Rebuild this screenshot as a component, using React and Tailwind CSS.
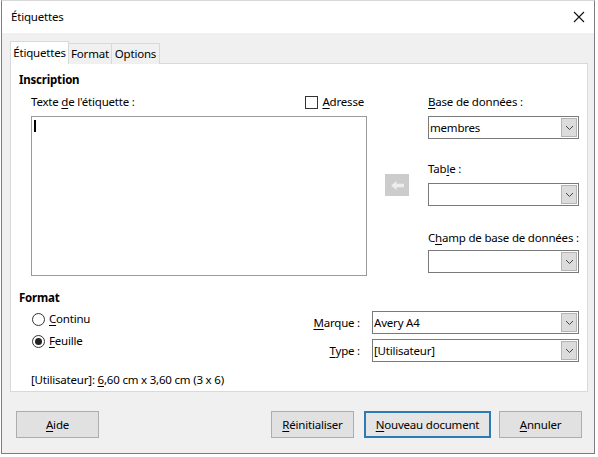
import { useState } from "react";

const font = { fontFamily: '"Noto Sans", "Open Sans", sans-serif' };

function U({ children }) {
  return <span className="underline underline-offset-2 decoration-1">{children}</span>;
}

function Chevron() {
  return (
    <svg width="9" height="6" viewBox="0 0 9 6" fill="none">
      <path d="M1 1 L4.5 4.5 L8 1" stroke="#444" strokeWidth="1" />
    </svg>
  );
}

function Combo({ value, width }) {
  return (
    <div className={`flex h-[23px] ${width} items-stretch border border-[#7a7a7a] bg-white`}>
      <div className="flex-1 truncate pl-[1px] leading-[21px] text-black">{value}</div>
      <div className="m-[1px] flex w-[16px] items-center justify-center border border-[#b4b4b4] bg-[#dcdcdc]">
        <Chevron />
      </div>
    </div>
  );
}

function Radio({ checked, children }) {
  return (
    <div className="flex h-[16px] items-center gap-[4px] leading-[16px]">
      <span className="flex h-[13px] w-[13px] items-center justify-center rounded-full border border-[#333] bg-white">
        {checked ? <span className="h-[7px] w-[7px] rounded-full bg-[#222]" /> : null}
      </span>
      <span>{children}</span>
    </div>
  );
}

function Button({ children, w, primary }) {
  return (
    <button
      type="button"
      className={`h-[27px] ${w} whitespace-nowrap text-black ${
        primary ? "border-2 border-[#2d7ab5] bg-[#e5e5e5]" : "border border-[#adadad] bg-[#e1e1e1]"
      }`}
    >
      {children}
    </button>
  );
}

export default function App() {
  const [tab] = useState(0);
  const tabs = ["Étiquettes", "Format", "Options"];
  const tabWidths = ["w-[59px]", "w-[44px]", "w-[49px]"];

  return (
    <div className="h-[457px] w-[598px] whitespace-nowrap bg-white text-[11.5px] tracking-[-0.2px] text-black" style={font}>
      <div className="ml-[1px] flex h-[454px] w-[594px] flex-col border border-[#7d7d7d] border-t-[#d8d8d8]">
        {/* title bar */}
        <div className="flex h-[32px] items-center justify-between bg-white pl-[9px] pr-[7px]">
          <span>Étiquettes</span>
          <svg width="12" height="12" viewBox="0 0 12 12" className="mr-[2px]">
            <path d="M1 1 L11 11 M11 1 L1 11" stroke="#111" strokeWidth="1.1" />
          </svg>
        </div>

        {/* body */}
        <div className="flex flex-1 flex-col bg-[#f0f0f0] pl-[8px] pt-[8px]">
          {/* tabs */}
          <div className="relative z-10 -mb-px flex items-end">
            {tabs.map((t, i) => (
              <div
                key={t}
                className={`${tabWidths[i]} border border-b-0 border-[#d9d9d9] text-center ${
                  i === tab ? "h-[23px] bg-white leading-[22px]" : "h-[21px] -ml-px bg-[#f0f0f0] leading-[20px]"
                }`}
              >
                {t}
              </div>
            ))}
          </div>

          {/* panel */}
          <div className="h-[329px] w-[578px] border border-[#d9d9d9] bg-white px-[8px] pt-[8px]">
            <div className="h-[16px] font-bold leading-[16px]">Inscription</div>

            <div className="mt-[6px] flex items-start">
              <div className="ml-[12px] w-[336px]">
                <div className="flex h-[16px] items-center justify-between leading-[16px]">
                  <span>
                    Texte <U>d</U>e l'étiquette :
                  </span>
                  <span className="mr-[3px] flex items-center gap-[4px]">
                    <span className="h-[13px] w-[13px] border border-[#333] bg-white" />
                    <span>
                      <U>A</U>dresse
                    </span>
                  </span>
                </div>
                <div className="mt-[6px] h-[160px] w-[336px] border border-[#9a9a9a] bg-white pl-[2px] pt-[3px]">
                  <div className="h-[12px] w-[2px] bg-black" />
                </div>
              </div>

              <div className="ml-[18px] mt-[80px] flex h-[22px] w-[24px] items-center justify-center bg-[#cccccc]">
                <svg width="15" height="11" viewBox="0 0 15 11">
                  <path d="M1 5.5 L6.5 1 L6.5 3.8 L14 3.8 L14 7.2 L6.5 7.2 L6.5 10 Z" fill="#ededed" />
                </svg>
              </div>

              <div className="ml-[19px] w-[151px]">
                <div className="h-[16px] leading-[16px]">
                  <U>B</U>ase de données :
                </div>
                <div className="mt-[6px]">
                  <Combo value="membres" width="w-[151px]" />
                </div>
                <div className="mt-[22px] h-[16px] leading-[16px]">
                  Tab<U>l</U>e :
                </div>
                <div className="mt-[6px]">
                  <Combo value="" width="w-[151px]" />
                </div>
                <div className="mt-[24px] h-[16px] leading-[16px]">
                  C<U>h</U>amp de base de données :
                </div>
                <div className="mt-[4px]">
                  <Combo value="" width="w-[151px]" />
                </div>
              </div>
            </div>

            <div className="mt-[14px] h-[16px] font-bold leading-[16px]">Format</div>

            <div className="flex items-start">
              <div className="ml-[13px] mt-[5px] flex flex-col gap-[6px]">
                <Radio>
                  <U>C</U>ontinu
                </Radio>
                <Radio checked>
                  <U>F</U>euille
                </Radio>
              </div>
              <div className="ml-auto mt-[5px] grid grid-cols-[auto_207px] items-center gap-x-[12px] gap-y-[5px]">
                <span className="text-right">
                  <U>M</U>arque :
                </span>
                <Combo value="Avery A4" width="w-[207px]" />
                <span className="text-right">
                  <U>T</U>ype :
                </span>
                <Combo value="[Utilisateur]" width="w-[207px]" />
              </div>
            </div>

            <div className="ml-[12px] mt-[10px] h-[16px] leading-[16px]">
              [Utilisateur]: <U>6</U>,60 cm x 3,60 cm (3 x 6)
            </div>
          </div>

          {/* buttons */}
          <div className="mt-[19px] flex items-center pr-[12px]">
            <div className="ml-[6px]">
              <Button w="w-[83px]">
                <U>A</U>ide
              </Button>
            </div>
            <div className="ml-auto flex gap-[10px]">
              <Button w="w-[83px]">
                <U>R</U>éinitialiser
              </Button>
              <div className="flex gap-[8px]">
                <Button w="w-[127px]" primary>
                  <U>N</U>ouveau document
                </Button>
                <Button w="w-[83px]">
                  <U>A</U>nnuler
                </Button>
              </div>
            </div>
          </div>
        </div>
      </div>
    </div>
  );
}
